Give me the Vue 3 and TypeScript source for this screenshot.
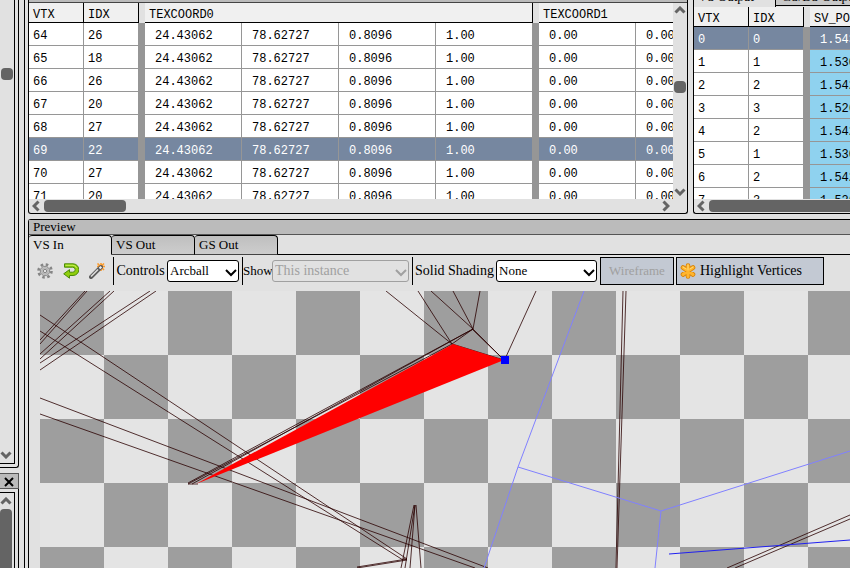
<script setup lang="ts">
import { ref } from 'vue'

interface InputRow {
  vtx: number
  idx: number
}

interface OutputRow extends InputRow {
  x: string
}

const inputRows: InputRow[] = [
  { vtx: 64, idx: 26 },
  { vtx: 65, idx: 18 },
  { vtx: 66, idx: 26 },
  { vtx: 67, idx: 20 },
  { vtx: 68, idx: 27 },
  { vtx: 69, idx: 22 },
  { vtx: 70, idx: 27 },
  { vtx: 71, idx: 20 },
]

const outputRows: OutputRow[] = [
  { vtx: 0, idx: 0, x: '1.543' },
  { vtx: 1, idx: 1, x: '1.530' },
  { vtx: 2, idx: 2, x: '1.542' },
  { vtx: 3, idx: 3, x: '1.526' },
  { vtx: 4, idx: 2, x: '1.542' },
  { vtx: 5, idx: 1, x: '1.530' },
  { vtx: 6, idx: 2, x: '1.542' },
  { vtx: 7, idx: 3, x: '1.526' },
]

const texcoord0 = ['24.43062', '78.62727', '0.8096', '1.00']

const selectedInput = ref(69)
const selectedOutput = ref(0)

const stages = ['VS In', 'VS Out', 'GS Out']
const activeStage = ref('VS In')
const controls = ref('Arcball')
const shading = ref('None')

// Mesh edges in viewport space: x1, y1, x2, y2
const edges: number[][] = [
  [85, 291, 40, 340],
  [87, 291, 40, 344],
  [110, 291, 40, 354],
  [114, 291, 40, 359],
  [150, 291, 40, 363],
  [156, 291, 40, 370],
  [40, 315, 407, 559],
  [40, 331, 403, 560],
  [40, 398, 488, 568],
  [40, 414, 475, 568],
  [188, 483, 473, 329],
  [188, 484, 452, 344],
  [192, 484, 473, 329],
  [188, 484, 198, 484],
  [452, 344, 504, 360],
  [473, 329, 504, 360],
  [472, 329, 503, 359],
  [473, 329, 452, 344],
  [386, 291, 452, 344],
  [418, 291, 452, 344],
  [431, 291, 473, 329],
  [453, 291, 473, 329],
  [480, 291, 473, 329],
  [536, 291, 505, 359],
  [414, 505, 401, 568],
  [415, 505, 405, 568],
  [415, 505, 410, 568],
  [416, 505, 421, 568],
  [357, 568, 407, 560],
  [357, 567, 407, 559],
  [403, 558, 407, 560],
  [623, 291, 616, 568],
  [626, 291, 617, 568],
  [727, 568, 850, 515],
  [735, 568, 850, 519],
]
</script>

<template>
  <div class="app">
    <aside class="side">
      <div class="side-panel upper">
        <div class="side-inner">
          <span class="side-thumb small"></span>
          <svg class="chev" viewBox="0 0 12 8"><path d="M1.500 1.500 6 6 10.500 1.500" /></svg>
        </div>
      </div>
      <div class="side-title">
        <button type="button" aria-label="Close">
          <svg viewBox="0 0 10 10"><path d="M1 1 9 9M9 1 1 9" /></svg>
        </button>
      </div>
      <div class="side-panel lower">
        <div class="side-inner">
          <svg class="chev" viewBox="0 0 12 8"><path d="M1.500 6.500 6 2 10.500 6.500" /></svg>
          <span class="side-thumb long"></span>
        </div>
      </div>
    </aside>

    <main class="main">
      <div class="tables">
        <section class="panel input-panel">
          <div class="strip"></div>
          <div class="view">
            <div class="clip">
              <table class="wide">
                <colgroup>
                  <col class="c-id" /><col class="c-id2" /><col class="c-gap" />
                  <col class="c-val" /><col class="c-val" /><col class="c-val" /><col class="c-last" />
                  <col class="c-gap" /><col class="c-val" /><col class="c-val" />
                </colgroup>
                <thead>
                  <tr>
                    <th class="line">VTX</th>
                    <th>IDX</th>
                    <th class="gap"></th>
                    <th colspan="4">TEXCOORD0</th>
                    <th class="gap"></th>
                    <th colspan="2">TEXCOORD1</th>
                  </tr>
                </thead>
                <tbody>
                  <tr
                    v-for="row in inputRows"
                    :key="row.vtx"
                    :class="{ selected: row.vtx === selectedInput }"
                    @click="selectedInput = row.vtx"
                  >
                    <td class="line">{{ row.vtx }}</td>
                    <td>{{ row.idx }}</td>
                    <td class="gap"></td>
                    <td v-for="(value, i) in texcoord0" :key="i" class="num" :class="{ line: i < 3 }">{{ value }}</td>
                    <td class="gap"></td>
                    <td class="num line">0.00</td>
                    <td class="num">0.00</td>
                  </tr>
                </tbody>
              </table>
            </div>
            <div class="vbar">
              <svg class="chev" viewBox="0 0 12 8"><path d="M1.500 6.500 6 2 10.500 6.500" /></svg>
              <span class="vthumb"></span>
              <svg class="chev" viewBox="0 0 12 8"><path d="M1.500 1.500 6 6 10.500 1.500" /></svg>
            </div>
          </div>
          <div class="hbar">
            <svg class="hchev" viewBox="0 0 8 12"><path d="M6.500 1.500 2 6 6.500 10.500" /></svg>
            <span class="hthumb"></span>
            <svg class="hchev end" viewBox="0 0 8 12"><path d="M1.500 1.500 6 6 1.500 10.500" /></svg>
          </div>
        </section>

        <section class="panel output-panel">
          <div class="out-tabs">
            <button type="button" class="out-tab on"><span>VS Output</span></button>
            <button type="button" class="out-tab"><span>GS/DS Output</span></button>
          </div>
          <div class="view">
            <div class="clip">
              <table class="narrow">
                <colgroup>
                  <col class="c-id" /><col class="c-id2" /><col class="c-gap" /><col class="c-val" />
                </colgroup>
                <thead>
                  <tr>
                    <th class="line">VTX</th>
                    <th>IDX</th>
                    <th class="gap"></th>
                    <th>SV_POSITION</th>
                  </tr>
                </thead>
                <tbody>
                  <tr
                    v-for="row in outputRows"
                    :key="row.vtx"
                    :class="{ selected: row.vtx === selectedOutput }"
                    @click="selectedOutput = row.vtx"
                  >
                    <td class="line">{{ row.vtx }}</td>
                    <td>{{ row.idx }}</td>
                    <td class="gap"></td>
                    <td class="num pos line">{{ row.x }}</td>
                  </tr>
                </tbody>
              </table>
            </div>
          </div>
          <div class="hbar">
            <svg class="hchev" viewBox="0 0 8 12"><path d="M6.500 1.500 2 6 6.500 10.500" /></svg>
            <span class="hthumb fill"></span>
          </div>
        </section>
      </div>

      <section class="preview">
        <h2>Preview</h2>
        <div class="tabs" role="tablist">
          <button
            v-for="stage in stages"
            :key="stage"
            type="button"
            role="tab"
            class="tab"
            :class="{ on: stage === activeStage }"
            :aria-selected="stage === activeStage"
            @click="activeStage = stage"
          >{{ stage }}</button>
          <span class="tab-rest"></span>
        </div>

        <div class="toolbar">
          <div class="icons">
            <button type="button" class="icon" aria-label="Options">
              <svg viewBox="0 0 16 16">
                <circle cx="8" cy="8" r="6.500" fill="none" stroke="#858585" stroke-width="2.600" stroke-dasharray="2.550 2.550" />
                <circle cx="8" cy="8" r="4.700" fill="#c9c9c9" stroke="#8b8b8b" />
                <circle cx="8" cy="8" r="3.200" fill="none" stroke="#b0b0b0" />
                <circle cx="8" cy="8" r="1.700" fill="#e1e1e1" stroke="#858585" />
              </svg>
            </button>
            <button type="button" class="icon" aria-label="Reset view">
              <svg viewBox="0 0 16 16">
                <path d="M1.500.800H10a5.200 5.200 0 0 1 0 11.700H6.500v2.700L.700 10.800l5.800-4.200v2.600h3.200a2.400 2.400 0 0 0 0-5H1.500z" fill="#8fce0c" stroke="#4a8a08" />
                <path d="M2.500 2.300H10a4 4 0 0 1 3.600 2.800" fill="none" stroke="#c9f05a" />
              </svg>
            </button>
            <button type="button" class="icon" aria-label="Highlight">
              <svg viewBox="0 0 16 16">
                <path d="M12 0v8M8 3.500h8M8.500.500l6.500 6.500M15 .500l-6.500 6.500" stroke="#ff9c2a" stroke-width="1.600" />
                <path d="M2 14 12 4" stroke="#5a5a5a" stroke-width="4" stroke-linecap="round" />
                <path d="M2 13.500 9 6.500" stroke="#dedede" stroke-width="1.600" />
                <path d="M10.500 5.500 12.300 3.700" stroke="#f0f0f0" stroke-width="2.200" />
              </svg>
            </button>
          </div>
          <div class="group">
            <label for="controls" class="l-controls">Controls</label>
            <span class="select controls">
              <select id="controls" v-model="controls"><option>Arcball</option><option>WASD</option></select>
              <svg viewBox="0 0 12 8"><path d="M1 1 6 6 11 1" /></svg>
            </span>
          </div>
          <div class="group">
            <label for="show" class="l-show">Show</label>
            <span class="select show">
              <select id="show" disabled><option>This instance</option></select>
              <svg viewBox="0 0 12 8"><path d="M1 1 6 6 11 1" /></svg>
            </span>
          </div>
          <div class="group">
            <label for="shading" class="l-shading">Solid Shading</label>
            <span class="select shading">
              <select id="shading" v-model="shading"><option>None</option><option>Solid</option></select>
              <svg viewBox="0 0 12 8"><path d="M1 1 6 6 11 1" /></svg>
            </span>
          </div>
          <button type="button" class="push wire" disabled>Wireframe</button>
          <button type="button" class="push verts">
            <svg viewBox="0 0 16 16">
              <g stroke="#d98308" stroke-width="4.600" stroke-linecap="round">
                <path d="M8 2.500v11M3 4.500l10 7M13 4.500l-10 7" />
              </g>
              <g stroke="#ffb52e" stroke-width="3" stroke-linecap="round">
                <path d="M8 2.500v11M3 4.500l10 7M13 4.500l-10 7" />
              </g>
              <path d="M8 2v5M3 4l3 2M13 4l-3 2" stroke="#ffdc7a" stroke-linecap="round" />
            </svg>
            <span>Highlight Vertices</span>
          </button>
        </div>

        <div class="viewport">
          <svg class="scene">
            <g transform="translate(-40 -291)">
              <line
                v-for="(e, i) in edges"
                :key="i"
                class="edge"
                :x1="e[0]"
                :y1="e[1]"
                :x2="e[2]"
                :y2="e[3]"
              />
              <path class="frustum" d="M584 291 518 467 484 568M518 467 661 511 850 451M661 511 655 568" />
              <path class="axis" d="M669 554 850 540" />
              <polygon class="face" points="196,484 453,344 504,360" />
              <rect class="vertex" x="501" y="356" width="8" height="8" />
            </g>
          </svg>
        </div>
      </section>
    </main>
  </div>
</template>

<style>
html,
body {
  background: #e1e1e1;
  overflow: hidden;
}
</style>

<style scoped>
* {
  box-sizing: border-box;
}

.app {
  display: flex;
  gap: 5px;
  height: 100vh;
  background: #e1e1e1;
  color: #000;
  font: 13px/14px 'Liberation Serif', serif;
  overflow: hidden;
}

button,
select {
  font: inherit;
  color: inherit;
  margin: 0;
  padding: 0;
  border: 0;
  background: none;
}

svg {
  display: block;
  fill: none;
}

/* left dock */
.side {
  width: 19px;
  flex: none;
  display: flex;
  flex-direction: column;
}

.side-panel {
  border-right: 1px solid #000;
  padding-right: 3px;
}

.upper {
  height: 468px;
  padding-bottom: 3px;
  border-bottom: 1px solid #000;
  border-radius: 0 0 3px 0;
}

.lower {
  flex: 1;
  padding-top: 3px;
}

.side-inner {
  height: 100%;
  border-right: 1px solid #000;
  display: flex;
  flex-direction: column;
}

.upper .side-inner {
  border-bottom: 1px solid #000;
  justify-content: space-between;
  padding: 68px 0 4px;
}

.lower .side-inner {
  border-top: 1px solid #000;
  padding-top: 4px;
  gap: 4px;
}

.side-thumb {
  width: 12px;
  background: #646464;
  border-radius: 4px;
}

.side-thumb.small {
  height: 12px;
  margin-left: 1px;
}

.side-thumb.long {
  flex: 1;
  border-radius: 4px 4px 0 0;
}

.side-title {
  margin-top: 5px;
  height: 16px;
  display: flex;
  justify-content: flex-end;
  background: #bbb;
  border: solid #555;
  border-width: 1px 1px 1px 0;
}

.side-title button {
  padding: 2px 4px 0 0;
}

.side-title svg {
  width: 10px;
  height: 10px;
  stroke: #000;
  stroke-width: 2;
}

.chev {
  width: 12px;
  height: 8px;
  flex: none;
  stroke: #646464;
  stroke-width: 3;
}

.hchev {
  width: 8px;
  height: 12px;
  flex: none;
  stroke: #646464;
  stroke-width: 3;
}

/* main column */
.main {
  flex: 1;
  min-width: 0;
  display: flex;
  flex-direction: column;
  gap: 5px;
  padding-left: 3px;
  border-left: 1px solid #000;
}

.tables {
  display: flex;
  gap: 5px;
  height: 214px;
}

.panel {
  display: flex;
  flex-direction: column;
  min-width: 0;
  border: solid #000;
  border-width: 0 1px 1px;
  border-radius: 0 0 3px 3px;
}

.input-panel {
  flex: 0 1 660px;
}

.output-panel {
  flex: 1 1 157px;
  border-right: 0;
  border-radius: 0 0 0 3px;
}

.strip {
  height: 3px;
  flex: none;
  background: #bbb;
  border-bottom: 1px solid #444;
}

.view {
  flex: 1;
  min-height: 0;
  display: flex;
}

.clip {
  flex: 1;
  min-width: 0;
  overflow: hidden;
}

.vbar {
  width: 14px;
  flex: none;
  display: flex;
  flex-direction: column;
  align-items: center;
  justify-content: space-between;
  padding: 3px 0;
}

.vthumb {
  width: 12px;
  height: 12px;
  margin-bottom: 28px;
  border-radius: 4px;
  background: #646464;
}

.hbar {
  height: 14px;
  flex: none;
  display: flex;
  align-items: center;
  gap: 4px;
  padding-left: 3px;
}

.hthumb {
  width: 82px;
  height: 12px;
  border-radius: 4px;
  background: #646464;
}

.hthumb.fill {
  flex: 1;
  border-radius: 4px 0 0 4px;
}

.end {
  margin: 0 17px 0 auto;
}

/* data tables */
table {
  table-layout: fixed;
  border-collapse: separate;
  border-spacing: 0;
  font: 12px/14px 'Liberation Mono', monospace;
}

.wide {
  width: 704px;
}

.narrow {
  width: 213px;
}

.c-id { width: 55px; }
.c-id2 { width: 54px; }
.c-gap { width: 7px; }
.c-val { width: 97px; }
.c-last { width: 96px; }

th {
  height: 20px;
  padding: 4px 4px 0;
  background: #f0f0f0;
  border-bottom: 1px solid #000;
  font-weight: 400;
  text-align: left;
  white-space: nowrap;
  overflow: hidden;
}

th.line {
  border-right: 1px solid #000;
}

th.gap {
  padding: 0;
  background: #e1e1e1;
  border-left: 1px solid #000;
  border-bottom: 0;
}

td {
  height: 23px;
  padding: 4px 4px 0;
  background: #fff;
  border-bottom: 1px solid #969696;
  white-space: nowrap;
  overflow: hidden;
}

td.line {
  border-right: 1px solid #969696;
}

td.num {
  padding-left: 10px;
}

td.pos {
  background: #8fd2ef;
}

.selected td {
  background: #7687a0;
  color: #fff;
}

td.gap,
.selected td.gap {
  padding: 0;
  background: #969696;
}

.out-tabs {
  height: 7px;
  flex: none;
  display: flex;
  overflow: hidden;
}

.out-tab {
  height: 6px;
  flex: 1;
  display: flex;
  align-items: flex-end;
  padding: 0 0 2px 6px;
  overflow: hidden;
  background: #c8c8c8;
  border-bottom: 1px solid #000;
  white-space: nowrap;
}

.out-tab.on {
  height: 7px;
  flex: 0 0 82px;
  padding: 0 0 4px 4px;
  background: #e1e1e1;
  border-right: 1px solid #000;
  border-bottom: 0;
}

.out-tab span {
  line-height: 12px;
}

/* preview */
.preview {
  flex: 1;
  min-height: 0;
  display: flex;
  flex-direction: column;
  border: solid #000;
  border-width: 1px 0 0 1px;
  border-radius: 3px 0 0 0;
}

h2 {
  height: 15px;
  flex: none;
  margin: 0;
  padding-left: 4px;
  font: inherit;
  background: #bbb;
  border-bottom: 1px solid #555;
}

.tabs {
  height: 20px;
  flex: none;
  display: flex;
}

.tab {
  width: 83px;
  padding-left: 4px;
  text-align: left;
  background: linear-gradient(#bfbfbf, #cdcdcd);
  border: solid #000;
  border-width: 1px 1px 1px 0;
  border-bottom-color: #444;
  border-radius: 3px 4px 0 0;
}

.tab.on {
  background: #e1e1e1;
  border-bottom-color: #e1e1e1;
}

.tab-rest {
  flex: 1;
  border-bottom: 1px solid #000;
}

.toolbar {
  flex: none;
  display: flex;
  align-items: center;
  padding: 2px 0 6px;
}

.icons {
  display: flex;
  gap: 10px;
  padding: 0 8px;
}

.icon {
  width: 16px;
  height: 16px;
}

.group {
  height: 28px;
  display: flex;
  align-items: center;
  padding-right: 3px;
  border-left: 1px solid #000;
}

.group label {
  white-space: nowrap;
  text-align: center;
}

.l-controls { width: 53px; }
.l-show { width: 29px; }
.l-shading { width: 83px; }

.l-controls,
.l-shading {
  font-size: 14px;
}

.select {
  position: relative;
  height: 22px;
}

.select select {
  appearance: none;
  width: 100%;
  height: 22px;
  padding-left: 2px;
  background: #fff;
  border: 1px solid #000;
  border-radius: 3px;
}

.select svg {
  position: absolute;
  right: 2px;
  top: 9px;
  width: 12px;
  height: 8px;
  stroke: #000;
  stroke-width: 2;
  pointer-events: none;
}

.controls { width: 72px; }
.show { width: 137px; }
.shading { width: 101px; }

.show select {
  font-size: 14px;
  color: #a0a0a0;
  background: #e1e1e1;
  border-color: #a0a0a0;
  opacity: 1;
}

.show svg {
  stroke: #a0a0a0;
}

.push {
  height: 28px;
  font-size: 14px;
  background: #c3c9d3;
  border: 1px solid #000;
  white-space: nowrap;
}

.wire {
  width: 74px;
  font-size: 13px;
  color: #a0a0a0;
}

.verts {
  width: 148px;
  margin-left: 2px;
  padding-left: 3px;
  display: flex;
  align-items: center;
  gap: 4px;
}

.verts svg {
  width: 16px;
  height: 16px;
}

.viewport {
  flex: 1;
  min-height: 0;
  margin-left: 11px;
  overflow: hidden;
  background: conic-gradient(#e4e4e4 25%, #9e9e9e 0 50%, #e4e4e4 0 75%, #9e9e9e 0) 0 0 / 128px 128px;
}

.scene {
  width: 100%;
  height: 100%;
}

.edge {
  stroke: #2a0000;
  stroke-width: 1;
  stroke-opacity: 0.8;
}

.frustum {
  stroke: #8080ff;
}

.axis {
  stroke: #2020f0;
}

.face {
  fill: #f00;
}

.vertex {
  fill: #00f;
}
</style>
